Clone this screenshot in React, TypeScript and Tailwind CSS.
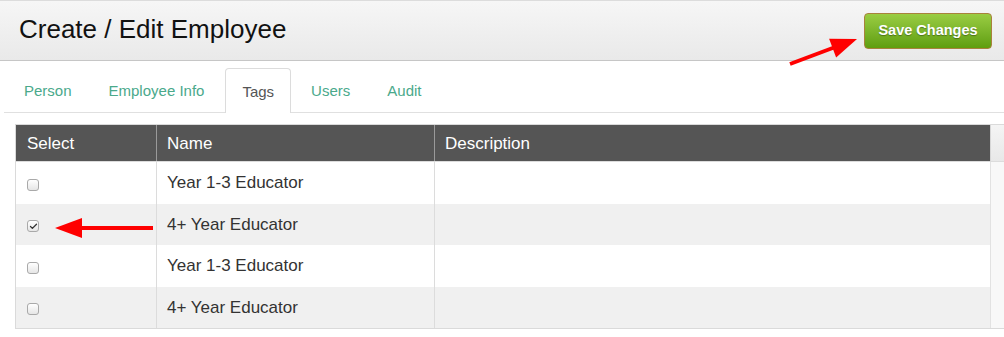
import { Check } from "lucide-react";

const tabs = ["Person", "Employee Info", "Tags", "Users", "Audit"];

const rows = [
  { name: "Year 1-3 Educator", checked: false },
  { name: "4+ Year Educator", checked: true },
  { name: "Year 1-3 Educator", checked: false },
  { name: "4+ Year Educator", checked: false },
];

function Box({ checked }: { checked: boolean }) {
  return (
    <span className="flex h-[12px] w-[12px] items-center justify-center rounded-[3px] border border-[#a9a9a9] bg-linear-to-b from-white to-[#e6e6e6]">
      {checked && <Check size={9} strokeWidth={3.5} className="text-[#333]" />}
    </span>
  );
}

export default function App() {
  return (
    <div className="relative h-[337px] w-[1004px] overflow-hidden bg-white font-['Liberation_Sans',Arial,sans-serif]">
      {/* page header */}
      <div className="flex h-[61px] items-center justify-between border-t border-b border-t-[#dcdcdc] border-b-[#c6c6c6] bg-linear-to-b from-[#f6f6f6] to-[#e9e9e9] pl-[19px] pr-[12px]">
        <h1 className="pb-[3px] text-[26px] leading-none text-[#111]">Create / Edit Employee</h1>
        <button className="flex h-[36px] w-[128px] items-center justify-center rounded-[4px] border border-[#a8823c] bg-linear-to-b from-[#9acd42] to-[#5f9e0c] text-[14.5px] font-bold text-white [text-shadow:0_1px_1px_rgba(0,0,0,0.35)]">
          Save Changes
        </button>
      </div>

      {/* tabs */}
      <div className="ml-[4px] mt-[7px] flex gap-[3px] border-b border-[#e0e0e0] pl-[3px]">
        {tabs.map((t) => (
          <div
            key={t}
            className={
              t === "Tags"
                ? "-mb-px ml-[1px] flex h-[45px] items-center rounded-t-[4px] border border-b-0 border-[#dcdcdc] bg-white px-[16px] pt-[3px] text-[15px] text-[#555]"
                : "flex h-[44px] items-center border border-transparent px-[16px] pt-[3px] text-[15px] text-[#4aa98b]"
            }
          >
            {t}
          </div>
        ))}
      </div>

      {/* table */}
      <div className="ml-[15px] mt-[11px] border-y border-l border-[#dadada]">
        <div className="grid h-[37px] grid-cols-[141px_278px_555px_1fr] border-b border-[#dcdcdc] text-[17px] text-white">
          <div className="flex items-center border-r border-[#9a9a9a] bg-[#555] pl-[11px] pt-[2px]">Select</div>
          <div className="flex items-center border-r border-[#9a9a9a] bg-[#555] pl-[10px] pt-[2px]">Name</div>
          <div className="flex items-center bg-[#555] pl-[10px] pt-[2px]">Description</div>
          <div className="border-l border-[#d6d6d6] bg-linear-to-b from-[#f4f4f4] to-[#e8e8e8]" />
        </div>
        {rows.map((r, i) => (
          <div
            key={i}
            className={`grid h-[41.5px] grid-cols-[141px_278px_555px_1fr] text-[17px] text-[#333] ${i % 2 ? "bg-[#f0f0f0]" : "bg-white"}`}
          >
            <div className="flex items-center border-r border-[#dcdcdc] pl-[11px] pt-[4px]">
              <Box checked={r.checked} />
            </div>
            <div className="flex items-center border-r border-[#dcdcdc] pl-[10px]">{r.name}</div>
            <div />
            <div className="border-l border-[#e2e2e2] bg-[#f8f8f8]" />
          </div>
        ))}
      </div>

      {/* annotation arrows */}
      <svg className="pointer-events-none absolute inset-0" width="1004" height="337">
        <line x1="790" y1="64" x2="834" y2="47.5" stroke="#ff0000" strokeWidth="4" />
        <polygon points="857,39 836.1,57.5 829.1,38.7" fill="#ff0000" />
        <line x1="80" y1="228" x2="153" y2="228" stroke="#ff0000" strokeWidth="4" />
        <polygon points="55,228 82,218 82,238" fill="#ff0000" />
      </svg>
    </div>
  );
}
